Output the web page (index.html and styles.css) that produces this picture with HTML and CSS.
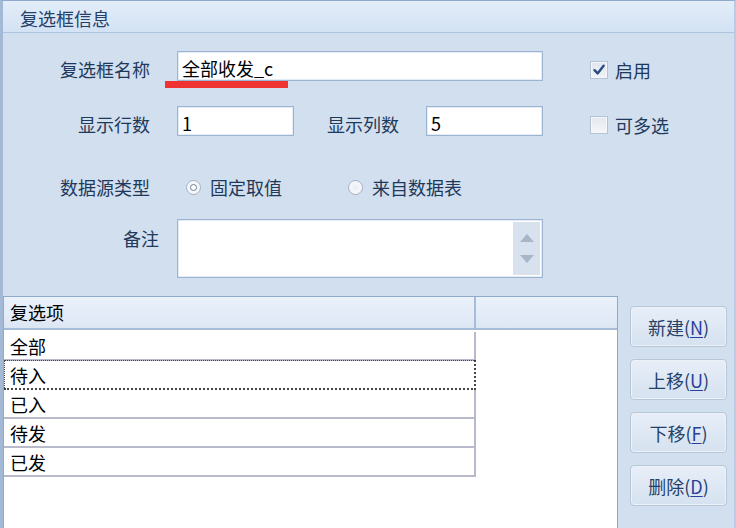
FILE: index.html
```html
<!DOCTYPE html>
<html lang="zh-CN">
<head>
<meta charset="utf-8">
<link rel="stylesheet" href="styles.css">
</head>
<body>
<div class="panel">
  <div class="title">复选框信息</div>
  <div class="form">
    <div class="row r1">
      <div class="label">复选框名称</div>
      <div class="input wide"><span class="val">全部收发_c</span></div>
      <div class="check"><span class="box checked"><svg width="14" height="14" viewBox="0 0 14 14"><path d="M2.5 7.2 L5.6 10.4 L11.6 2.8" fill="none" stroke="#2b4a7e" stroke-width="2.4" stroke-linecap="round" stroke-linejoin="round"/></svg></span><span class="ctext">启用</span></div>
      <div class="redline"></div>
    </div>
    <div class="row r2">
      <div class="label">显示行数</div>
      <div class="input small"><span class="val">1</span></div>
      <div class="label2">显示列数</div>
      <div class="input small"><span class="val">5</span></div>
      <div class="check"><span class="box"></span><span class="ctext">可多选</span></div>
    </div>
    <div class="row r3">
      <div class="label">数据源类型</div>
      <div class="radio first"><span class="dot on"></span><span class="rtext">固定取值</span></div>
      <div class="radio"><span class="dot"></span><span class="rtext">来自数据表</span></div>
    </div>
    <div class="row r4">
      <div class="label top">备注</div>
      <div class="input area">
        <div class="spin">
          <svg width="14" height="8" viewBox="0 0 14 8"><path d="M0 8 L7 0 L14 8 Z" fill="#a9b6c9"/></svg>
          <svg width="14" height="8" viewBox="0 0 14 8"><path d="M0 0 L7 8 L14 0 Z" fill="#a9b6c9"/></svg>
        </div>
      </div>
    </div>
  </div>
  <div class="bottom">
    <div class="grid">
      <div class="ghead">
        <div class="hc c1">复选项</div>
        <div class="hc c2"></div>
      </div>
      <div class="gbody">
        <div class="grow">全部</div>
        <div class="grow focus">待入</div>
        <div class="grow">已入</div>
        <div class="grow">待发</div>
        <div class="grow">已发</div>
      </div>
    </div>
    <div class="buttons">
      <div class="btn">新建(<u>N</u>)</div>
      <div class="btn">上移(<u>U</u>)</div>
      <div class="btn">下移(<u>F</u>)</div>
      <div class="btn">删除(<u>D</u>)</div>
    </div>
  </div>
</div>
</body>
</html>
```

FILE: styles.css
```css
* { box-sizing: border-box; }
html, body { margin: 0; padding: 0; }
body {
  width: 736px;
  height: 528px;
  overflow: hidden;
  background: #d2dfee;
  font-family: "Noto Sans CJK SC", "Microsoft YaHei", sans-serif;
  font-size: 18px;
  color: #1e395b;
}
.panel {
  width: 736px;
  height: 528px;
  border-left: 3px solid #a3b9d6;
  border-top: 1px solid #8eaacd;
  border-right: 2px solid #b9cce3;
  background: #d2dfee;
  display: flex;
  flex-direction: column;
}
.title {
  height: 32px;
  line-height: 34px;
  padding-left: 17px;
  background: linear-gradient(#e3edf9, #d3e2f4);
  border-bottom: 1px solid #adc3de;
  color: #24416a;
  flex: none;
}
.form {
  padding-top: 18px;
  display: flex;
  flex-direction: column;
}
.row {
  display: flex;
  align-items: center;
  position: relative;
}
.r1 { height: 30px; }
.r2 { height: 30px; margin-top: 25px; }
.r3 { height: 30px; margin-top: 36px; }
.r4 { height: 59px; margin-top: 17px; align-items: flex-start; }
.label {
  width: 174px;
  padding-right: 27px;
  text-align: right;
  line-height: 30px;
  flex: none;
}
.r1 .label, .r2 .label, .r2 .label2 { padding-top: 6px; }
.label.top {
  padding-right: 18px;
  line-height: 20px;
  padding-top: 9px;
}
.label2 {
  width: 132px;
  padding-left: 33px;
  flex: none;
  white-space: nowrap;
  line-height: 30px;
}
.input {
  background: #fff;
  border: 1px solid #9cb3d1;
  box-shadow: inset 0 0 0 1px #e3ebf5;
  height: 30px;
  flex: none;
  display: flex;
  align-items: center;
  padding-left: 4px;
  color: #000;
}
.input .val { font-size: 18px; line-height: 28px; padding-top: 3px; }
.input.wide { width: 366px; }
.input.small { width: 117px; }
.input.area {
  width: 366px;
  height: 59px;
  justify-content: flex-end;
  align-items: stretch;
  padding: 2px 2px 2px 0;
}
.spin {
  width: 27px;
  background: #d8e2ef;
  display: flex;
  flex-direction: column;
  align-items: center;
  justify-content: space-between;
  padding: 12px 0 12px;
}
.check {
  margin-left: 47px;
  display: flex;
  align-items: center;
  flex: none;
  padding-top: 7px;
}
.box {
  width: 18px;
  height: 18px;
  border: 1px solid #b4c2d6;
  background: linear-gradient(#e4e8ee, #f4f6f9);
  box-shadow: inset 0 0 0 1px #f5f7fa;
  display: flex;
  align-items: center;
  justify-content: center;
}
.box.checked { background: linear-gradient(#dfe6f0, #f1f4f8); }
.ctext { margin-left: 7px; line-height: 30px; }
.redline {
  position: absolute;
  left: 162px;
  top: 30px;
  width: 123px;
  height: 7px;
  background: #f13232;
}
.radio {
  display: flex;
  align-items: center;
  flex: none;
}
.radio.first { margin-left: 9px; width: 162px; }
.dot {
  width: 15px;
  height: 15px;
  border-radius: 50%;
  border: 1px solid #a5b3c6;
  background: radial-gradient(circle, #e9edf3 0, #f6f8fb 60%, #dfe5ed 100%);
  position: relative;
  flex: none;
}
.dot.on::after {
  content: "";
  position: absolute;
  left: 3px;
  top: 3px;
  width: 7px;
  height: 7px;
  border-radius: 50%;
  border: 1.5px solid #6d7f9a;
  box-sizing: border-box;
  background: #fff;
}
.rtext { margin-left: 9px; line-height: 30px; }
.bottom {
  margin-top: 18px;
  flex: 1;
  display: flex;
  min-height: 0;
}
.grid {
  width: 615px;
  background: #fff;
  border: 1px solid #8fa9c8;
  border-bottom: none;
  flex: none;
  display: flex;
  flex-direction: column;
  color: #000;
}
.ghead {
  display: flex;
  height: 33px;
  background: linear-gradient(#eaf1fb, #dde7f4);
  border-bottom: 2px solid #a6bcd7;
  flex: none;
}
.hc { line-height: 31px; padding-left: 6px; }
.hc.c1 { width: 472px; border-right: 2px solid #a6bcd7; }
.hc.c2 { flex: 1; }
.gbody { padding-top: 2px; }
.grow {
  width: 472px;
  height: 29px;
  line-height: 28px;
  padding-left: 6px;
  border-right: 2px solid #b9b9cc;
  border-bottom: 2px solid #b9b9cc;
}
.grow.focus {
  border: 1px dotted #444;
  border-right: 2px dotted #444;
  border-bottom: 2px dotted #444;
  padding-left: 5px;
  margin-top: -1px;
  height: 30px;
}
.buttons {
  margin-left: 12px;
  padding-top: 10px;
  display: flex;
  flex-direction: column;
  gap: 12px;
}
.btn {
  width: 97px;
  height: 41px;
  border: 1px solid #b7c7da;
  border-radius: 4px;
  background: linear-gradient(#e7eef8, #d6e2f0);
  box-shadow: inset 0 0 0 1px #edf2f9;
  display: flex;
  align-items: center;
  justify-content: center;
  color: #24416a;
  font-size: 18px;
}
.btn u { color: #2a3f9a; text-decoration: underline; text-underline-offset: 2px; }
```
